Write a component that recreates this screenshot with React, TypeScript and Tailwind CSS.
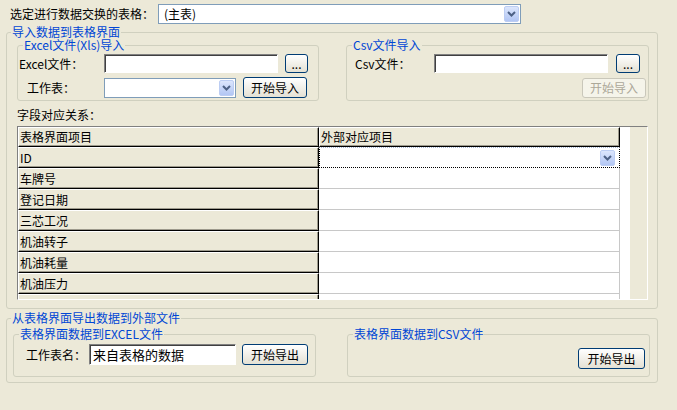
import React from 'react';

const Chevron: React.FC = () => (
  <svg width="9" height="6" viewBox="0 0 9 6">
    <path d="M1 1l3.5 3.5L8 1" fill="none" stroke="#4D6185" strokeWidth="2" />
  </svg>
);

const DropBtn: React.FC = () => (
  <span className="w-[15px] h-[16px] shrink-0 flex items-center justify-center rounded-[2px] border border-[#BCCDF3] bg-linear-to-b from-[#DCE6FC] to-[#B2C6F4]">
    <Chevron />
  </span>
);

const Btn: React.FC<{ className: string; disabled?: boolean; children: React.ReactNode }> = ({ className, disabled, children }) => (
  <button
    className={`${className} shrink-0 rounded-[3px] border flex items-center justify-center text-[12px] leading-none ${
      disabled
        ? 'border-[#C9C7BA] text-[#ACA899] bg-[#F5F4EA]'
        : 'border-[#003C74] text-black bg-linear-to-b from-white to-[#E4E1D4]'
    }`}
  >
    {children}
  </button>
);

// sunken classic textbox
const TextBox: React.FC<{ className: string; value?: string }> = ({ className, value }) => (
  <div className={`${className} shrink-0 bg-white border border-t-[#808080] border-l-[#808080] border-b-white border-r-white shadow-[inset_1px_1px_0_#404040] flex items-center pl-[3px] text-[13px] leading-none text-black whitespace-nowrap`}>
    {value}
  </div>
);

const Combo: React.FC<{ className: string; value?: string }> = ({ className, value }) => (
  <div className={`${className} shrink-0 bg-white border border-[#7F9DB9] flex items-center justify-between pl-[5px] pr-[1px]`}>
    <span>{value}</span>
    <DropBtn />
  </div>
);

const rowCell =
  'bg-[#ECE9D8] border-t border-l border-t-white border-l-white border-b border-r border-b-black border-r-black shadow-[inset_-1px_-1px_0_#9D9A8C] pl-[1px] flex items-center whitespace-nowrap';

const fields = ['车牌号', '登记日期', '三芯工况', '机油转子', '机油耗量', '机油压力', '机油温度'];

export default function App() {
  return (
    <div className="w-[677px] h-[410px] overflow-hidden bg-[#ECE9D8] text-[12px] leading-[12px] text-black font-['Noto_Sans_CJK_SC','Noto_Sans',sans-serif]">
      {/* table select */}
      <div className="flex items-center h-[20px] mt-[4px] pl-[10px]">
        <span className="w-[148px] whitespace-nowrap">选定进行数据交换的表格：</span>
        <Combo className="w-[363px] h-[20px]" value="(主表)" />
      </div>

      {/* import group */}
      <fieldset className="ml-[6px] mt-[2px] w-[652px] border border-[#D0D0BF] rounded-[3px] pb-[8px]">
        <legend className="ml-[4px] px-[1px] text-[#0046D5] leading-[12px]">导入数据到表格界面</legend>

        <div className="flex pl-[10px] gap-[27px] mt-[1px]">
          <fieldset className="w-[302px] border border-[#D0D0BF] rounded-[3px] pb-[2px]">
            <legend className="ml-[5px] px-[1px] text-[#0046D5] leading-[12px]">Excel文件(Xls)导入</legend>
            <div className="flex items-center h-[19px] mt-[3px]">
              <span className="w-[86px] pl-[1px] whitespace-nowrap">Excel文件：</span>
              <TextBox className="w-[174px] h-[19px]" />
              <Btn className="ml-[7px] w-[23px] h-[19px]">...</Btn>
            </div>
            <div className="flex items-center h-[21px] mt-[4px]">
              <span className="w-[86px] pl-[9px] whitespace-nowrap">工作表：</span>
              <Combo className="w-[132px] h-[20px]" />
              <Btn className="ml-[7px] w-[64px] h-[21px]">开始导入</Btn>
            </div>
          </fieldset>

          <fieldset className="w-[303px] border border-[#D0D0BF] rounded-[3px] pb-[2px]">
            <legend className="ml-[5px] px-[1px] text-[#0046D5] leading-[12px]">Csv文件导入</legend>
            <div className="flex items-center h-[19px] mt-[3px]">
              <span className="w-[87px] pl-[8px] whitespace-nowrap">Csv文件：</span>
              <TextBox className="w-[174px] h-[19px]" />
              <Btn className="ml-[8px] w-[24px] h-[19px]">...</Btn>
            </div>
            <div className="flex items-center justify-end h-[21px] mt-[4px] pr-[2px]">
              <Btn className="w-[64px] h-[20px]" disabled>开始导入</Btn>
            </div>
          </fieldset>
        </div>

        <div className="mt-[8px] pl-[10px]">字段对应关系：</div>

        {/* mapping grid */}
        <div className="mt-[5px] ml-[10px] w-[631px] h-[174px] border border-t-[#808080] border-l-[#808080] border-b-white border-r-white flex overflow-hidden">
          <div className="w-[602px] flex flex-col">
            <div className="flex h-[20px] shrink-0">
              <div className={`w-[301px] ${rowCell}`}>表格界面项目</div>
              <div className={`w-[301px] ${rowCell}`}>外部对应项目</div>
            </div>
            <div className="flex h-[21px] shrink-0">
              <div className={`w-[301px] ${rowCell}`}>ID</div>
              <div className="w-[301px] bg-white border-t border-t-[#A7B9D6] border-b border-r border-l border-dotted border-b-black border-r-black border-l-black flex items-center justify-end pr-[4px]">
                <DropBtn />
              </div>
            </div>
            {fields.map(f => (
              <div key={f} className="flex h-[21px] shrink-0">
                <div className={`w-[301px] ${rowCell}`}>{f}</div>
                <div className="w-[301px] bg-white border-b border-r border-[#C8C8C8]" />
              </div>
            ))}
          </div>
          <div className="w-[10px] bg-white" />
          <div className="flex-1" />
        </div>
      </fieldset>

      {/* export group */}
      <fieldset className="ml-[6px] mt-[3px] w-[652px] border border-[#D0D0BF] rounded-[3px] pb-[5px]">
        <legend className="ml-[4px] px-[1px] text-[#0046D5] leading-[12px]">从表格界面导出数据到外部文件</legend>
        <div className="flex pl-[6px] gap-[31px] mt-[4px]">
          <fieldset className="w-[303px] border border-[#D0D0BF] rounded-[3px] pb-[10px]">
            <legend className="ml-[5px] px-[1px] text-[#0046D5] leading-[12px]">表格界面数据到EXCEL文件</legend>
            <div className="flex items-center h-[21px] mt-[4px]">
              <span className="w-[75px] pl-[12px] whitespace-nowrap">工作表名：</span>
              <TextBox className="w-[147px] h-[21px]" value="来自表格的数据" />
              <Btn className="ml-[6px] w-[66px] h-[21px]">开始导出</Btn>
            </div>
          </fieldset>
          <fieldset className="w-[303px] border border-[#D0D0BF] rounded-[3px] pb-[7px]">
            <legend className="ml-[5px] px-[1px] text-[#0046D5] leading-[12px]">表格界面数据到CSV文件</legend>
            <div className="flex justify-end mt-[8px] pr-[4px]">
              <Btn className="w-[67px] h-[21px]">开始导出</Btn>
            </div>
          </fieldset>
        </div>
      </fieldset>
    </div>
  );
}
